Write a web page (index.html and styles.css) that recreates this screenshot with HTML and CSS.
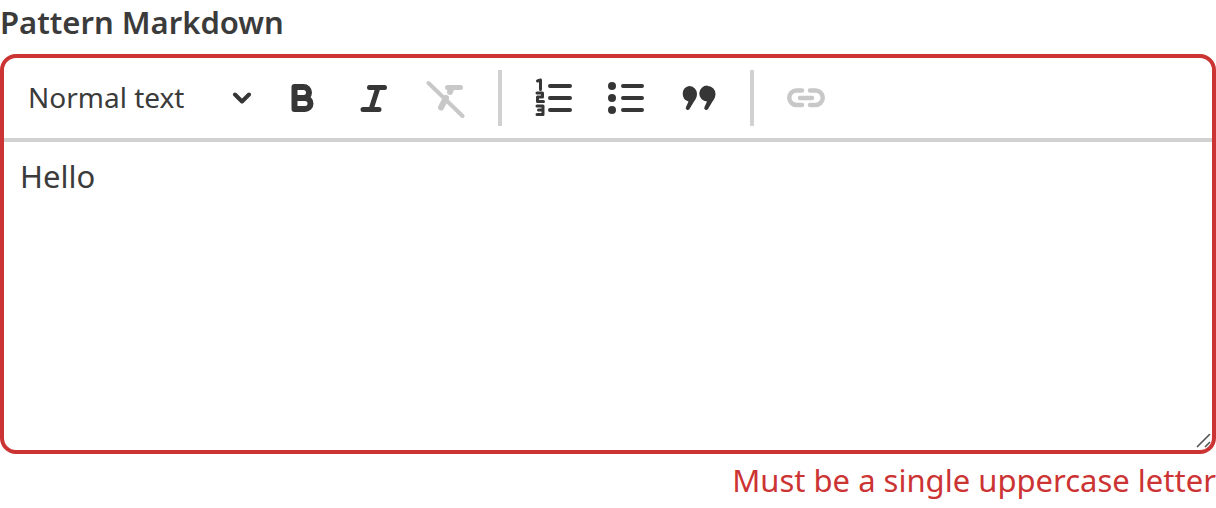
FILE: index.html
```html
<!DOCTYPE html>
<html lang="en">
<head>
<meta charset="utf-8">
<title>Pattern Markdown</title>
<link rel="stylesheet" href="styles.css">
</head>
<body>
<div class="field">
  <label class="label">Pattern Markdown</label>
  <div class="editor">
    <div class="toolbar">
      <div class="select">
        <span>Normal text</span>
        <svg class="chevron" viewBox="0 0 20 12"><path d="M3 2.500l7 7 7-7"/></svg>
      </div>
      <button class="btn"><svg class="icon" viewBox="0 0 40 40"><path class="s6" d="M12.500 9v22h10.500a5.500 5.500 0 0 0 0-11H12.500m0 0h9a5.500 5.500 0 0 0 0-11H12.500"/></svg></button>
      <button class="btn"><svg class="icon" viewBox="0 0 40 40"><path class="s5" d="M15.500 9.500h15M9 31.500h16"/><path class="s5" d="M24 9.500l-7 22"/></svg></button>
      <button class="btn off"><svg class="icon" viewBox="0 0 40 40"><path class="s4" d="M2.500 5l34 33"/><path class="s5" d="M21.500 9.500h13"/><path class="s6" d="M25 11l-1 3M20 20l-5 9.500"/></svg></button>
      <span class="sep"></span>
      <button class="btn"><svg class="icon" viewBox="0 0 40 40"><path class="s4" d="M16 8h20M16 20h20M16 32h20"/><path class="s3" d="M3.500 3l3-1v9.500M3 15h5.500v4h-5v4.500h6M3 28h6v8.500h-6M4.500 32h4.500"/></svg></button>
      <button class="btn"><svg class="icon" viewBox="0 0 40 40"><circle cx="6" cy="8" r="4"/><circle cx="6" cy="20" r="4"/><circle cx="6" cy="32" r="4"/><path class="s4" d="M17 8h19M17 20h19M17 32h19"/></svg></button>
      <button class="btn"><svg class="icon" viewBox="0 0 40 40"><path d="M11 8a8 8 0 0 1 8 8c0 3-1.500 5.500-3 7.500l-4.500 7.500a2 2 0 0 1-3.500-2l2.500-5.500A8 8 0 0 1 11 8zM29.500 8a8 8 0 0 1 8 8c0 3-1.500 5.500-3 7.500l-4.500 7.500a2 2 0 0 1-3.500-2l2.500-5.500a8 8 0 0 1 .5-16z"/></svg></button>
      <span class="sep"></span>
      <button class="btn off"><svg class="icon" viewBox="0 0 40 40"><path class="s45" d="M16 12.500h-5.500a7.250 7.250 0 0 0 0 14.500h5.500M24 12.500h5.500a7.250 7.250 0 0 1 0 14.500h-5.500M14 20h12"/></svg></button>
    </div>
    <div class="content">
      <p>Hello</p>
      <svg class="grip" viewBox="0 0 16 16"><path d="M1 13L14 0M9 13l5-5"/></svg>
    </div>
  </div>
  <div class="error">Must be a single uppercase letter</div>
</div>
</body>
</html>
```
FILE: styles.css
```css
* { box-sizing: border-box; }
html, body { margin: 0; padding: 0; background: #fff; }
body { font-family: "Noto Sans", sans-serif; color: #3b3b3b; width: 1216px; height: 508px; overflow: hidden; }
.field { display: flex; flex-direction: column; }
.label { display: block; height: 54px; font-size: 31px; font-weight: 600; line-height: 45px; color: #3b3b3b; }
.editor { height: 400px; border: 4px solid #cc3333; border-radius: 16px; display: flex; flex-direction: column; overflow: hidden; }
.toolbar { height: 84px; flex: none; display: flex; align-items: center; border-bottom: 4px solid #d1d1d1; }
.select { width: 262px; height: 80px; display: flex; align-items: center; justify-content: space-between; padding: 0 14px 0 24px; font-size: 28px; }
.select span { display: block; line-height: 40px; margin-bottom: 2px; }
.chevron { width: 20px; height: 12px; }
.chevron path { fill: none; stroke: #363636; stroke-width: 4; stroke-linecap: round; stroke-linejoin: round; }
.btn { width: 72px; height: 72px; padding: 0; border: 0; background: none; display: flex; align-items: center; justify-content: center; color: #363636; }
.btn.off { color: #c8c8c8; }
.icon { width: 40px; height: 40px; display: block; fill: currentColor; }
.icon path { fill: none; stroke: currentColor; stroke-linecap: round; stroke-linejoin: round; }
.icon path:not([class]) { fill: currentColor; stroke: none; }
.s3 { stroke-width: 3; }
.s4 { stroke-width: 4; }
.s45 { stroke-width: 4.5; }
.s5 { stroke-width: 5; }
.s6 { stroke-width: 6; }
.sep { width: 4px; height: 56px; margin: 0 16px; background: #d1d1d1; flex: none; }
.content { flex: 1; position: relative; padding: 12px 17px 0 16px; font-size: 31px; line-height: 44px; }
.content p { margin: 0; }
.grip { position: absolute; right: 0; bottom: 0; width: 16px; height: 16px; }
.grip path { fill: none; stroke: #555; stroke-width: 1.6; }
.error { height: 54px; text-align: right; font-size: 31px; line-height: 52px; color: #cc3333; }
```
